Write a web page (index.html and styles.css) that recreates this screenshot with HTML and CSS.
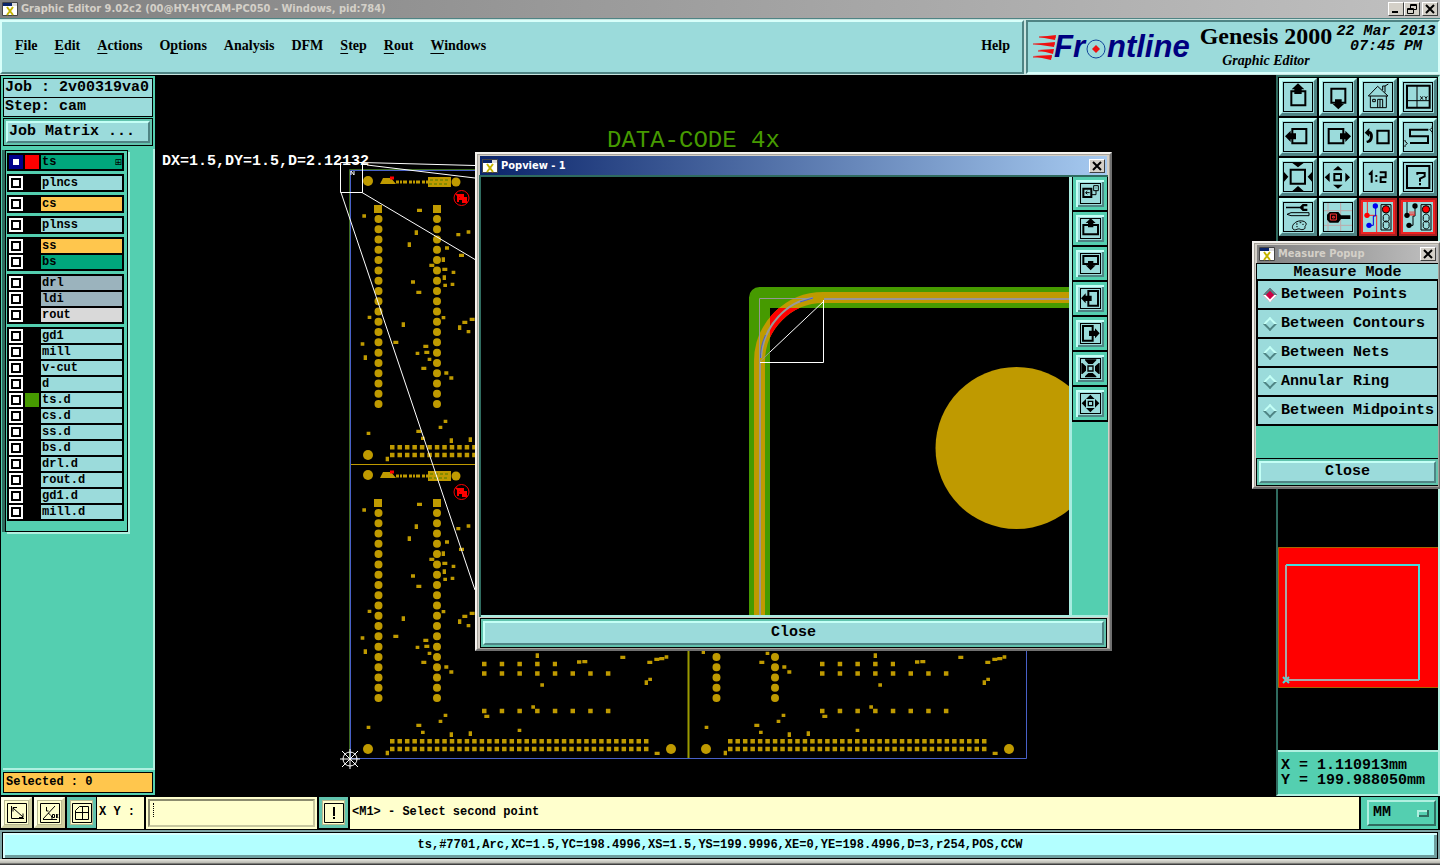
FILE: index.html
```html
<!DOCTYPE html>
<html lang="en">
<head>
<meta charset="utf-8">
<title>Graphic Editor 9.02c2</title>
<link rel="stylesheet" href="styles.css">
</head>
<body>
<svg class="defs" aria-hidden="true">
  <symbol id="app" viewBox="0 0 16 14"><path fill="#fff" stroke="#444" d="M.5.5h15v13H.5z"/><path fill="#0a246a" d="M1 1h9v3H1z"/><path fill="#ddd" d="M10 1h5v3h-5z"/><path stroke="#c4b400" stroke-width="2" d="M5 5l6 8M11 5l-6 8"/></symbol>
  <symbol id="close" viewBox="0 0 10 10"><path stroke="#000" stroke-width="2" d="M1 1l8 8M9 1L1 9"/></symbol>
  <symbol id="up" viewBox="0 0 90 90"><path class="k6" d="M25 28h42v42H25z"/><path d="M45 4l19 18h-8v14H34V22h-8z"/></symbol>
  <symbol id="down" viewBox="0 0 90 90"><path class="k6" d="M25 20h42v42H25z"/><path d="M46 82L29 66h7V52h20v14h7z"/></symbol>
  <symbol id="left" viewBox="0 0 90 90"><path class="k6" d="M28 21h42v43H28z"/><path d="M6 43l17-17v8h16v18H23v8z"/></symbol>
  <symbol id="right" viewBox="0 0 90 90"><path class="k6" d="M17 21h44v43H17z"/><path d="M84 43L67 26v8H51v18h16v8z"/></symbol>
  <symbol id="home" viewBox="0 0 90 90"><path class="k3" d="M16 42l28-29 31 29zM22 42v35h48V42M44 77V52h15v25M51 52v25M29 52h8v7h-8zM59 24V12h7v19M66 12l10-6"/></symbol>
  <symbol id="xy" viewBox="0 0 90 90"><path class="k6" d="M12 11h68v66H12z"/><path class="k3" d="M42 11v66M12 56h68M52 43l8 10M60 43l-8 10M65 43l4 5 4-5M69 48v6"/></symbol>
  <symbol id="back" viewBox="0 0 90 90"><path class="k6" d="M43 26h34v38H43z"/><path d="M5 32l14-14v9c15 0 16 37-7 36l-2-7c14 0 12-20 9-20v9z"/></symbol>
  <symbol id="snake" viewBox="0 0 90 90"><path class="k6" d="M76 23H21v20h54v20H21"/><path class="k3" d="M88 12v4l-7 7 7 8v4M6 54v4l7 6-7 7v4"/></symbol>
  <symbol id="out" viewBox="0 0 90 90"><path class="k6" d="M23 23h43v42H23z"/><path d="M28 3h34L45 16zM45 72l17 15H28zM3 30l13 14L3 59zM87 30L74 44l13 15z"/></symbol>
  <symbol id="in" viewBox="0 0 90 90"><path class="k6" d="M34 36h20v19H34z"/><path d="M45 12l14 13H30zM30 68h29L45 80zM20 32v28L5 46zM67 32v28l14-14z"/></symbol>
  <symbol id="ratio" viewBox="0 0 90 90"><path class="k6" d="M18 38l8-8v32M40 39v6M40 53v6M50 31h18v15H53v14h17"/></symbol>
  <symbol id="help" viewBox="0 0 90 90"><path class="k6" d="M12 12h67v66H12zM43 38v-5h22v10l-14 7v9M51 63v7"/></symbol>
  <symbol id="tools" viewBox="0 0 90 90"><path d="M9 14h42l8-8h14v7H62v7h11v7H59l-8-8H9z"/><path class="k3" d="M12 37l12-5h54v9H24zM30 81c-4-6-1-14 8-20 10-7 27-5 31 2 3 6-5 9-3 13 2 6-10 9-16 5-8-2-14 7-20 0zM39 66h5M50 62h5M58 67h4M40 74h4"/></symbol>
  <symbol id="probe" viewBox="0 0 90 90"><path stroke="#bda9a9" stroke-width="3" d="M15 2v86M53 2v86M2 26h86M2 70h86"/><path d="M20 30h26l8 10h28v11H54L46 62H20l-8-9V38z"/><path fill="none" stroke="#f33" stroke-width="3" d="M22 36h18v18H22zM29 43h5v5h-5z"/></symbol>
  <symbol id="lights" viewBox="0 0 90 90"><path fill="#9bdbdb" stroke="#000" stroke-width="3" d="M54 8h30v76H54z"/><circle fill="#f00" stroke="#000" stroke-width="3" cx="69" cy="22" r="11"/><path class="k3" d="M61 48a9 9 0 1 0 17 0a9 9 0 1 0-17 0M61 69a9 9 0 1 0 17 0a9 9 0 1 0-17 0"/></symbol>
  <symbol id="net1" viewBox="0 0 90 90"><path fill="none" stroke="#f22" stroke-width="3" d="M13 0v40h28v50"/><path fill="none" stroke="#00d" stroke-width="3" d="M38 12v30h-7v28H18"/><circle fill="#f00" cx="12" cy="40" r="8"/><circle fill="#00e" cx="37" cy="12" r="8"/><circle fill="#00e" cx="18" cy="70" r="8"/><use href="#lights" width="90" height="90"/></symbol>
  <symbol id="net2" viewBox="0 0 90 90"><path class="k3" d="M12 0v40M36 12v30h-6v28H18"/><path fill="none" stroke="#f22" stroke-width="3" d="M18 39h18M21 28v11M27 28v11M33 28v11"/><circle cx="12" cy="40" r="8"/><circle cx="36" cy="12" r="8"/><circle cx="18" cy="70" r="8"/><use href="#lights" width="90" height="90"/></symbol>
  <symbol id="p-pop" viewBox="0 0 63 63"><path class="k6" d="M10 17h24v25H10z"/><path class="k3" d="M41 8h14v15H41zM48 14v2M48 23v12H34M17 29h12M22 24l-5 5 5 5"/></symbol>
  <symbol id="p-up" viewBox="0 0 63 63"><path class="k6" d="M10 21h44v28H10z"/><path d="M32 1l15 14h-7v13H24V15h-7z"/></symbol>
  <symbol id="p-down" viewBox="0 0 63 63"><path class="k6" d="M10 9h44v24H10z"/><path d="M32 52L17 37h7V24h16v13h7z"/></symbol>
  <symbol id="p-left" viewBox="0 0 63 63"><path class="k6" d="M25 9h29v44H25z"/><path d="M3 31l14-15v7h18v16H17v7z"/></symbol>
  <symbol id="p-right" viewBox="0 0 63 63"><path class="k6" d="M9 9h29v44H9z"/><path d="M59 31L45 16v7H27v16h18v7z"/></symbol>
  <symbol id="p-out" viewBox="0 0 63 63"><path fill="none" stroke="#000" stroke-width="4" d="M24 24h15v15H24z"/><path d="M15 4h34v3L38 18H25L15 7zM25 45h13l11 10v3H15v-3zM4 15h3l11 10v13L7 48H4zM59 15h-3L45 25v13l11 10h3z"/></symbol>
  <symbol id="p-in" viewBox="0 0 63 63"><path fill="none" stroke="#000" stroke-width="4" d="M25 25h13v13H25z"/><path d="M31 5l13 13H18zM18 45h26L31 58zM18 18v26L5 31zM45 18v26l13-13z"/></symbol>
  <g id="board">
    <g fill="#bf9a00">
      <circle cx="18" cy="11" r="5"/><circle cx="106" cy="12" r="4.5"/><path d="M30 14l3-6h8l5 6zM78 7h23v10H78zM24 35h8v8h-8zM83 35h8v8h-8z"/>
      <circle cx="18" cy="285" r="5"/><circle cx="321" cy="285" r="5"/>
    </g>
    <path stroke="#bf9a00" stroke-width="3" stroke-dasharray="3 1 2 1 4 2" d="M46 12h32"/>
    <path stroke="#4a7a00" stroke-width="1" stroke-dasharray="3 2" d="M80 10h19M79 14h20"/>
    <path stroke="#f00" stroke-width="3" d="M40 8h4"/>
    <path fill="none" stroke="#bf9a00" stroke-width="8" stroke-linecap="round" stroke-dasharray="0 10.28" d="M28.500 49v186M87 49v186"/>
    <path stroke="#bf9a00" stroke-width="4.500" stroke-dasharray="4.500 2.970" d="M40 277.300h259M40 285h259"/>
    <path stroke="#bf9a00" stroke-width="4.500" stroke-dasharray="4.500 13.200" d="M132 200h75M132 209.500h129M132 247h129"/>
    <g stroke="#bf9a00" stroke-width="10" stroke-linecap="square" fill="none">
      <path transform="translate(-20 -20) scale(.3333)" d="M102 198h1M266 181h5M259 246v4M238 282v4M248 396h2M264 427h5M118 502h1M220 522v4M97 582h1M106 621v4M195 577h5M262 610h1M285 589h5M288 607h5M298 628h1M279 655h5M348 669h2M363 684h2M346 814h1M331 832h1M264 844h5M278 865h1M364 870v4M421 867v4M115 850h1M384 254h2M415 246h1M350 294h2M392 316h5M340 327v4M303 346h5M342 358h5M370 367h1M343 381v4M345 406h1M367 403h1M340 503h1M389 531v4M402 517h5M424 508h5M415 545h1M172 925v4"/>
      <path transform="translate(-10 176) scale(.3333)" d="M592 45v4M716 66h3M732 65h5M846 52h5M927 67h5M948 58h5M963 56h5M979 51h1M919 126v4M930 118h1M606 135h1M579 201h1M438 229h5M538 271h1M949 340h5"/>
    </g>
    <circle cx="111.500" cy="28" r="7.500" fill="none" stroke="#f00"/>
    <path fill="none" stroke="#f00" stroke-width="2" d="M108 32v-7h3v4h-2M113 24v8h3v-4h-3M106 24l11 8"/>
  </g>
</svg>

<div class="app">
  <div class="title main-title"><svg class="app-icon"><use href="#app"/></svg><span>Graphic Editor 9.02c2 (00@HY-HYCAM-PC050 - Windows, pid:784)</span>
    <div class="sys">
      <button aria-label="Minimize"><svg viewBox="0 0 10 10"><path d="M1 7h6v2H1z"/></svg></button><button aria-label="Restore"><svg viewBox="0 0 10 10"><path fill="none" stroke="#000" d="M3.500 4V.500h6v5H7M3 1.500h7M.500 4.500h6v5h-6zM0 5.500h7"/></svg></button><button class="x" aria-label="Close window"><svg><use href="#close"/></svg></button>
    </div>
  </div>

  <header class="head">
    <nav class="menu">
      <button><u>F</u>ile</button><button><u>E</u>dit</button><button><u>A</u>ctions</button><button>O<u>p</u>tions</button><button>Analysis</button><button>DFM</button><button><u>S</u>tep</button><button><u>R</u>out</button><button><u>W</u>indows</button><button class="help">Help</button>
    </nav>
    <div class="brand">
      <svg class="logo" viewBox="0 0 164 40" role="img" aria-label="Frontline">
        <path fill="#e11" d="M7 9l17-2-1 5zM2 16l21-2-1 5zM6 22l16-1-1 5zM1 28l19-1-1 5z"/><path stroke="#e11" d="M7 9h17M1 16h22M6 23h15M1 29h19"/>
        <text class="logo-text" x="22" y="29">Fr</text><text class="logo-text" x="75" y="29">ntline</text>
        <circle cx="64" cy="21" r="9" fill="none" stroke="#149"/><path fill="#e11" d="M64 17l4 4-4 4-4-4z"/>
      </svg>
      <div class="product"><strong>Genesis 2000</strong><em>Graphic Editor</em></div>
      <time>22 Mar 2013<br>07:45 PM</time>
    </div>
  </header>

  <main class="work">
    <aside class="left">
      <div class="job">Job : 2v00319va0</div>
      <div class="job">Step: cam</div>
      <div class="frame"><button class="bevel matrix">Job Matrix ...</button></div>
      <div class="layers-area">
        <div class="layers">
          <div class="group"><label class="layer green sel"><input type="checkbox" checked><i class="red"></i><span>ts<b>⊞</b></span></label></div>
          <div class="group"><label class="layer"><input type="checkbox"><i></i><span>plncs</span></label></div>
          <div class="group"><label class="layer gold"><input type="checkbox"><i></i><span>cs</span></label></div>
          <div class="group"><label class="layer"><input type="checkbox"><i></i><span>plnss</span></label></div>
          <div class="group"><label class="layer gold"><input type="checkbox"><i></i><span>ss</span></label><label class="layer green"><input type="checkbox"><i></i><span>bs</span></label></div>
          <div class="group"><label class="layer slate"><input type="checkbox"><i></i><span>drl</span></label><label class="layer slate"><input type="checkbox"><i></i><span>ldi</span></label><label class="layer pale"><input type="checkbox"><i></i><span>rout</span></label></div>
          <div class="group"><label class="layer"><input type="checkbox"><i></i><span>gd1</span></label><label class="layer"><input type="checkbox"><i></i><span>mill</span></label><label class="layer"><input type="checkbox"><i></i><span>v-cut</span></label><label class="layer"><input type="checkbox"><i></i><span>d</span></label><label class="layer"><input type="checkbox"><i class="lime"></i><span>ts.d</span></label><label class="layer"><input type="checkbox"><i></i><span>cs.d</span></label><label class="layer"><input type="checkbox"><i></i><span>ss.d</span></label><label class="layer"><input type="checkbox"><i></i><span>bs.d</span></label><label class="layer"><input type="checkbox"><i></i><span>drl.d</span></label><label class="layer"><input type="checkbox"><i></i><span>rout.d</span></label><label class="layer"><input type="checkbox"><i></i><span>gd1.d</span></label><label class="layer"><input type="checkbox"><i></i><span>mill.d</span></label></div>
        </div>
      </div>
      <div class="selected">Selected : 0</div>
    </aside>

    <div class="canvas">
      <svg viewBox="155 75 1122 722" preserveAspectRatio="xMinYMin slice">
        <text class="datacode" x="607" y="147">DATA-CODE 4x</text>
        <use href="#board" x="350" y="170"/><use href="#board" x="688" y="170"/>
        <use href="#board" x="350" y="464"/><use href="#board" x="688" y="464"/>
        <path stroke="#bf9a00" d="M350 464.500h676"/><path stroke="#9a9a00" d="M688.500 170v588" stroke-width="2"/>
        <path fill="none" stroke="#3d6a20" d="M349.500 758V169.500H1026"/>
        <path fill="none" stroke="#4860c8" d="M350.500 170.500h676v588h-676z"/>
        <g fill="none" stroke="#fff"><path d="M340.500 162.500h22v30h-22zM362 162.500l113 3M367 165l108 13M362 192.500l113 67M341 192.500L475 590M351 175v-4l3 4v-4"/>
        <circle cx="350" cy="759" r="7"/><path d="M350 749v20M340 759h20M342 751l16 16M358 751l-16 16"/></g>
        <text class="measure" x="162" y="165">DX=1.5,DY=1.5,D=2.12132</text>
      </svg>
    </div>

    <aside class="right">
      <div class="tools">
        <button aria-label="Pan up"><svg><use href="#up"/></svg></button><button aria-label="Pan down"><svg><use href="#down"/></svg></button><button aria-label="Home"><svg><use href="#home"/></svg></button><button aria-label="Zoom XY"><svg><use href="#xy"/></svg></button>
        <button aria-label="Pan left"><svg><use href="#left"/></svg></button><button aria-label="Pan right"><svg><use href="#right"/></svg></button><button aria-label="Previous view"><svg><use href="#back"/></svg></button><button aria-label="Route view"><svg><use href="#snake"/></svg></button>
        <button aria-label="Zoom in"><svg><use href="#out"/></svg></button><button aria-label="Zoom out"><svg><use href="#in"/></svg></button><button aria-label="Actual size"><svg><use href="#ratio"/></svg></button><button aria-label="Query"><svg><use href="#help"/></svg></button>
        <button aria-label="Setup"><svg><use href="#tools"/></svg></button><button aria-label="Probe"><svg><use href="#probe"/></svg></button><button class="hot" aria-label="Net check"><svg><use href="#net1"/></svg></button><button class="hot" aria-label="Rule check"><svg><use href="#net2"/></svg></button>
      </div>
      <div class="overview"><svg viewBox="0 0 160 141"><path fill="#f00" stroke="#a60" d="M.5.5h160v140H.5z"/><path fill="none" stroke="#4dd" stroke-width="2" d="M8 18h133v115M5 130l6 6M11 130l-6 6"/><path fill="none" stroke="#a9a9a9" stroke-width="2" d="M8 18v115h133"/></svg></div>
      <div class="coords">X = 1.110913mm<br>Y = 199.988050mm</div>
    </aside>
  </main>

  <div class="command">
    <button class="tool" aria-label="Snap line"><svg viewBox="0 0 20 20"><path d="M.5.5h19v19H.5zM4.500 3v12.500H17M6 5l10 9M6 8.500v-4h4M12 14.500h4v-4"/></svg></button>
    <button class="tool" aria-label="Angle"><svg viewBox="0 0 20 20"><path d="M.5.5h19v19H.5zM3 16L15 3M3 16.500h14M6.500 4v4h2M8 10c3 2 4 3 4 6M12.500 11.500h2v3h-2zM16.500 11v4M18 11l-1 2 1 2"/></svg></button>
    <button class="tool mint" aria-label="Grid"><svg viewBox="0 0 20 20"><path d="M.5.5h19v19H.5zM7.500 3.500h9v13h-13v-9zM10.500 3v13M3 9.500h14"/></svg></button>
    <label class="xy" for="xy-in">X Y :</label>
    <div class="entry"><input id="xy-in" type="text"></div>
    <button class="tool mint bang" aria-label="Alert"><svg viewBox="0 0 20 20"><path d="M.5.5h19v19H.5z"/><path stroke-width="2" d="M10 4v9M10 14v2"/></svg></button>
    <output class="message">&lt;M1&gt; - Select second point</output>
    <div class="unit"><select aria-label="Units"><option>MM</option></select></div>
  </div>
  <footer class="status"><div>ts,#7701,Arc,XC=1.5,YC=198.4996,XS=1.5,YS=199.9996,XE=0,YE=198.4996,D=3,r254,POS,CCW</div></footer>

  <section class="window popview" aria-label="Popview - 1">
    <div class="title active"><svg class="app-icon"><use href="#app"/></svg><span>Popview - 1</span><div class="sys"><button aria-label="Close popview"><svg><use href="#close"/></svg></button></div></div>
    <div class="pop-body">
      <div class="pop-canvas"><svg viewBox="481 177 588 438" preserveAspectRatio="xMinYMin slice">
        <defs><clipPath id="inside"><path d="M770 308h90v90h-90z"/></clipPath></defs>
        <path fill="none" stroke="#469a00" stroke-width="21" stroke-linejoin="round" d="M759.500 640V297.500H1080"/>
        <path fill="none" stroke="#bf9a00" stroke-width="11" d="M759.500 640V362A64 64 0 0 1 824 297.500H1080"/>
        <path fill="none" stroke="#f00" stroke-width="11" clip-path="url(#inside)" d="M759.500 362A64 64 0 0 1 824 297.500"/>
        <path fill="none" stroke="#969696" stroke-width="2" d="M760 640V362M824 299H1080"/>
        <path fill="none" stroke="#969696" d="M759.500 362V298.500H812M759.500 362L770 352"/>
        <path fill="none" stroke="#999" stroke-width="2" d="M761 358C763 325 788 301 813 298"/>
        <path fill="none" stroke="#4860c8" d="M760.500 358c0-12 3-18 5-23M800 302l13-4"/>
        <path fill="none" stroke="#fff" d="M760 362.500h63.500V300M770 352l54-51"/>
        <circle cx="1016.500" cy="448" r="81" fill="#bf9a00"/>
      </svg></div>
      <div class="pop-tools">
        <button aria-label="Pop view"><svg><use href="#p-pop"/></svg></button><button aria-label="Popview up"><svg><use href="#p-up"/></svg></button><button aria-label="Popview down"><svg><use href="#p-down"/></svg></button><button aria-label="Popview left"><svg><use href="#p-left"/></svg></button><button aria-label="Popview right"><svg><use href="#p-right"/></svg></button><button aria-label="Popview zoom in"><svg><use href="#p-out"/></svg></button><button aria-label="Popview zoom out"><svg><use href="#p-in"/></svg></button>
      </div>
    </div>
    <div class="frame"><button class="bevel">Close</button></div>
  </section>

  <section class="window measure-pop" aria-label="Measure Popup">
    <div class="title inactive"><svg class="app-icon"><use href="#app"/></svg><span>Measure Popup</span><div class="sys"><button aria-label="Close measure popup"><svg><use href="#close"/></svg></button></div></div>
    <fieldset>
      <legend>Measure Mode</legend>
      <label><input type="radio" name="mode" checked>Between Points</label>
      <label><input type="radio" name="mode">Between Contours</label>
      <label><input type="radio" name="mode">Between Nets</label>
      <label><input type="radio" name="mode">Annular Ring</label>
      <label><input type="radio" name="mode">Between Midpoints</label>
    </fieldset>
    <div class="spacer"></div>
    <div class="frame"><button class="bevel">Close</button></div>
  </section>
</div>
</body>
</html>
```
FILE: styles.css
```css
:root {
  --cyan: #9bdbdb;
  --teal: #54cfb0;
  --deep: #2f6b5f;
  --hi: #c4fff6;
  --lo: #4f8484;
  --cream: #ffffcd;
  --mono: "Liberation Mono", monospace;
}
* { box-sizing: border-box; }
body { margin: 0; background: #000; overflow: hidden; font: bold 15px/18px var(--mono); color: #000; }
button, input, select { font: inherit; color: inherit; margin: 0; padding: 0; border-radius: 0; }
svg { display: block; }
.defs { position: absolute; width: 0; height: 0; }
.k6 { fill: none; stroke: #000; stroke-width: 6; }
.k3 { fill: none; stroke: #000; stroke-width: 3; }
.app { position: relative; display: flex; flex-direction: column; height: 100vh; min-height: 600px; }

/* title bars */
.title { display: flex; align-items: center; gap: 3px; height: 18px; padding: 0 2px; font: bold 11px/18px "DejaVu Sans Condensed", "DejaVu Sans", sans-serif; white-space: nowrap; color: #d4d0c8; }
.main-title { flex: none; background: linear-gradient(90deg, #808080, #c0c0c0); }
.app-icon { width: 16px; height: 14px; flex: none; }
.sys { margin-left: auto; display: flex; }
.sys button { width: 16px; height: 14px; display: grid; place-items: center; background: #d4d0c8; border: 1px solid; border-color: #fff #404040 #404040 #fff; }
.sys .x { margin-left: 2px; }
.sys svg { width: 10px; height: 10px; }
.active { color: #fff; background: linear-gradient(90deg, #0a246a, #a6caf0); }
.inactive { background: linear-gradient(90deg, #808080, #c0c0c0); }

/* header */
.head { flex: none; display: flex; gap: 2px; height: 57px; padding: 1px 0; background: #c8e4e0; border-top: 1px solid var(--lo); }
.menu { flex: 1; display: flex; align-items: center; gap: 17px; padding: 0 12px 2px 13px; background: var(--cyan); border: 2px solid; border-color: #d8fffa var(--lo) var(--lo) #d8fffa; }
.menu button { border: 0; background: none; font: bold 14px/18px "Liberation Serif", serif; }
.menu u { text-underline-offset: 3px; }
.menu .help { margin-left: auto; }
.brand { width: 414px; display: flex; align-items: flex-start; background: var(--cyan); border: 2px solid; border-color: var(--lo) #d8fffa #d8fffa var(--lo); }
.logo { width: 164px; height: 40px; margin: 6px 2px 0 4px; flex: none; }
.logo-text { font: italic bold 31px "Liberation Sans", sans-serif; fill: #000080; }
.product { width: 136px; display: flex; flex-direction: column; text-align: center; }
.product strong { font: bold 24px/28px "Liberation Serif", serif; white-space: nowrap; }
.product em { font: italic bold 14px/22px "Liberation Serif", serif; }
.brand time { flex: 1; padding-top: 2px; text-align: center; font: italic bold 15px/15px var(--mono); white-space: nowrap; }

/* work area */
.work { flex: 1; min-height: 0; display: flex; background: #000; }
.left { width: 155px; margin: 1px 0 2px; padding: 2px 2px 2px 2px; display: flex; flex-direction: column; background: var(--teal); border-left: 1px solid #000; }
.job { height: 20px; padding-left: 1px; margin-bottom: -1px; background: var(--cyan); border: 1px solid #000; white-space: nowrap; }
.frame { padding: 2px; border: 1px solid #000; background: #62c4ae; }
.left .frame { margin: 2px 0 3px; }
.bevel { display: block; width: 100%; height: 22px; background: var(--cyan); border: 2px solid; border-color: var(--hi) var(--lo) var(--lo) var(--hi); }
.matrix { text-align: left; padding-left: 1px; }
.layers-area { flex: 1; border: solid; border-width: 0 2px 2px 0; border-color: #b0f0e0; margin: 0 -2px 2px 0; }
.layers { width: 123px; margin: 1px 0 0 2px; padding: 2px 3px 10px 1px; display: flex; flex-direction: column; gap: 3px; border: 1px solid #000; box-shadow: 2px 2px #b0f0e0, -3px 0 var(--deep); }
.group { display: flex; flex-direction: column; gap: 2px; padding: 2px; background: #000; }
.layer { display: flex; gap: 2px; height: 14px; font-size: 12px; line-height: 14px; }
.layer input { appearance: none; height: 14px; background: #000; border: 2px solid #fff; display: grid; place-items: center; }
.layer input, .layer i { flex: none; width: 14px; }
.layer input::before { content: ""; width: 6px; height: 6px; background: #fff; }
.layer.sel input { background: #00008c; border-color: #00008c; }
.layer .red { background: #f00; }
.layer .lime { background: #469a00; }
.layer span { flex: 1; display: flex; justify-content: space-between; padding-left: 1px; background: var(--cyan); }
.layer b { font: 9px/14px "DejaVu Sans", sans-serif; }
.layer.green span { background: #00a67c; }
.layer.gold span { background: #ffc64d; }
.layer.slate span { background: #9bb3bd; }
.layer.pale span { background: #d9d9d9; }
.selected { height: 21px; padding-left: 2px; background: #ffc64d; border: 1px solid #000; font-size: 12px; line-height: 18px; }
.canvas { flex: 1; min-width: 0; overflow: hidden; }
.canvas svg { width: 100%; height: 100%; }
.datacode { font: 24px var(--mono); fill: #469a00; }
.measure { font: bold 15px var(--mono); fill: #fff; }

/* right column */
.right { width: 164px; display: flex; flex-direction: column; margin-bottom: 1px; border: 2px solid; border-color: var(--deep) #b0f0e0 #b0f0e0 var(--deep); }
.tools { display: grid; grid-template-columns: repeat(4, 38px); gap: 2px; padding: 1px 0 4px 1px; }
.tools button { width: 38px; height: 38px; display: grid; place-items: center; background: var(--cyan); border: 3px solid; border-color: var(--hi) var(--lo) var(--lo) var(--hi); }
.tools svg { width: 30px; height: 30px; outline: 1px solid #000; outline-offset: -1px; }
.tools .hot { background: #e22; border: 2px solid #a22; }
.tools .hot svg { background: var(--cyan); outline: 0; }
.overview { flex: 1; display: flex; align-items: flex-end; padding-bottom: 62px; }
.overview svg { width: 100%; }
.coords { height: 44px; padding: 6px 3px 0; line-height: 15px; background: var(--teal); border-top: 2px solid #b0f0e0; }

/* command line */
.command { flex: none; display: flex; gap: 2px; height: 33px; padding: 0 2px 1px 1px; }
.tool { flex: none; width: 31px; height: 31px; display: grid; place-items: center; background: var(--cream); border: 3px solid; border-color: #ffffe8 #d0cfa0 #d0cfa0 #ffffe8; outline: 1px solid #b8b890; outline-offset: -4px; }
.tool svg { width: 20px; height: 20px; fill: none; stroke: #000; }
.mint { width: 29px; border-color: #62c4ae; }
.xy { width: 47px; margin-left: -1px; padding-left: 2px; background: var(--cream); line-height: 30px; font-size: 12px; white-space: nowrap; }
.entry { position: relative; width: 171px; padding: 2px; background: var(--cream); }
.entry::after { content: ""; position: absolute; left: 7px; top: 6px; height: 14px; border-left: 1px dotted #000; }
.entry input { display: block; width: 100%; height: 28px; padding-left: 4px; background: var(--cream); border: 2px solid; border-color: #8c8c6e #c8c8a0 #c8c8a0 #8c8c6e; font-size: 12px; }
.message { flex: 1; padding-left: 2px; background: var(--cream); font-size: 12px; line-height: 30px; white-space: nowrap; }
.unit { width: 77px; padding: 3px 2px 3px 6px; background: var(--teal); }
.unit select {
  appearance: none; width: 100%; height: 26px; padding-left: 4px; font-size: 15px; border: 2px solid; border-color: #b0f0e0 var(--deep) var(--deep) #b0f0e0;
  background:
    linear-gradient(var(--teal), var(--teal)) right 7px center / 8px 3px no-repeat,
    linear-gradient(90deg, #b0f0e0 2px, transparent 2px, transparent 10px, var(--deep) 10px) right 5px center / 12px 7px no-repeat,
    linear-gradient(#b0f0e0 2px, var(--deep) 2px) right 5px center / 12px 7px no-repeat,
    var(--teal);
}
.status { flex: none; height: 35px; padding: 2px 2px 6px; background: linear-gradient(#7fa5a5 29px, #e8e8e0 29px, #b8b8b0 33px, #404040 34px); }
.status div { height: 27px; border: 1px solid #000; background: #b3ffff; box-shadow: inset 2px 2px #d8ffff, inset -3px -3px #6f9f9f; text-align: center; font-size: 12px; line-height: 24px; white-space: nowrap; overflow: hidden; }

/* floating windows */
.window { position: absolute; background: #d4d0c8; border: 2px solid; border-color: #f4f2ee #707070 #707070 #f4f2ee; outline: 1px solid #a8a49c; outline-offset: -3px; }
.window .title { margin: 1px 1px 0; }
.window .frame { padding: 2px; }
.popview { left: 475px; top: 152px; width: 637px; height: 499px; padding: 1px 2px; display: flex; flex-direction: column; }
.popview .title { height: 19px; }
.pop-body { flex: 1; display: flex; gap: 3px; min-height: 0; background: #a8ece0; border-top: 2px solid var(--deep); border-left: 2px solid var(--deep); padding-bottom: 2px; }
.pop-canvas { flex: 1; min-width: 0; background: #000; overflow: hidden; }
.pop-canvas svg { width: 100%; height: 100%; }
.pop-tools { width: 36px; display: flex; flex-direction: column; gap: 2px; background: linear-gradient(#000 245px, var(--teal) 245px); padding: 0 1px; }
.pop-tools button { height: 33px; display: grid; place-items: center; background: var(--cyan); border: 3px solid; border-color: var(--teal); box-shadow: inset 2px 2px var(--hi), inset -2px -2px var(--lo); }
.pop-tools svg { width: 21px; height: 21px; outline: 1px solid #000; outline-offset: -1px; }
.popview > .frame { margin: 1px 1px 0; }
.popview .bevel { height: 24px; }
.measure-pop { left: 1252px; right: -1px; top: 241px; padding: 1px 0 1px 2px; }
.measure-pop fieldset { margin: 0; padding: 0; min-width: 0; border: 1px solid #000; background: var(--cyan); }
.measure-pop legend { float: left; width: 100%; padding: 3px 0 0; text-align: center; line-height: 12px; border-bottom: 1px solid #000; }
.measure-pop label { clear: both; display: flex; align-items: center; gap: 6px; height: 29px; padding-left: 7px; border: 1px solid #000; white-space: nowrap; }
.measure-pop input { appearance: none; width: 10px; height: 10px; transform: rotate(45deg); border: 2px solid; border-color: var(--hi) var(--lo) var(--lo) var(--hi); }
.measure-pop input:checked { background: #cc0044; border-color: var(--lo) #fff #fff var(--lo); }
.spacer { height: 32px; background: var(--teal); }
.measure-pop .bevel { height: 22px; }
```
